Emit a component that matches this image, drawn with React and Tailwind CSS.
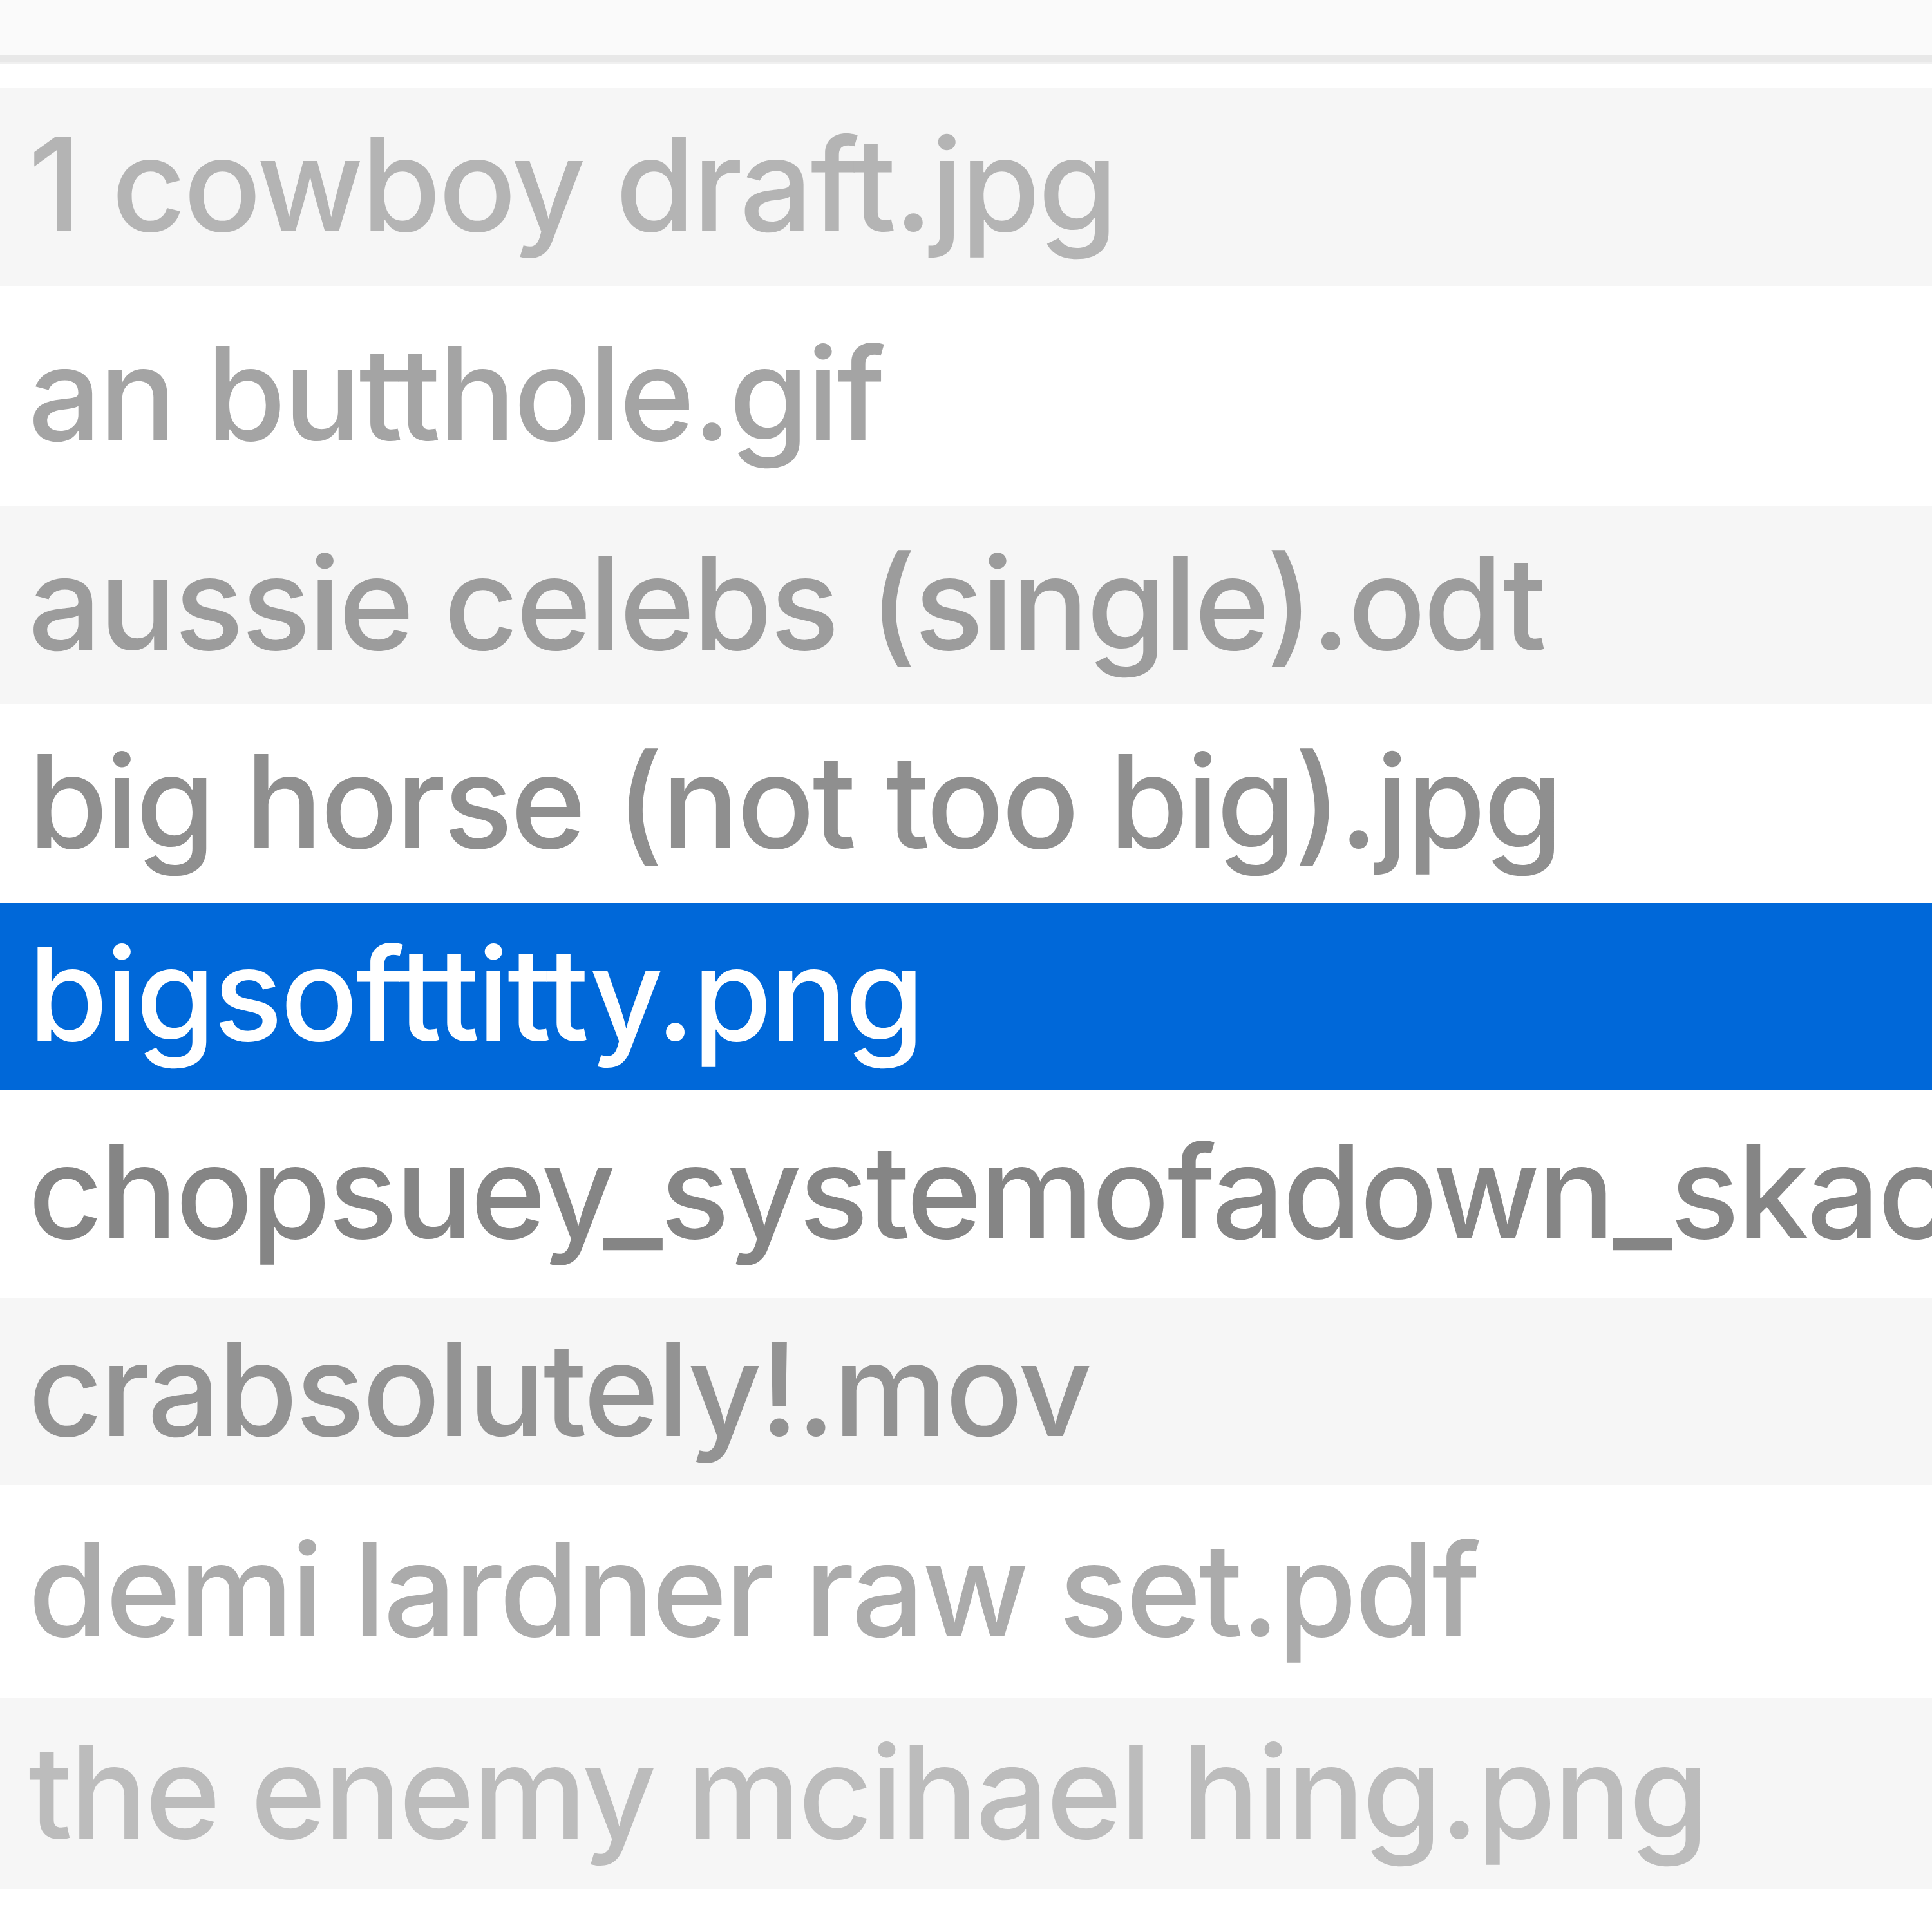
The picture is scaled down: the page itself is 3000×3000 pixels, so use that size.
const files = [
  { name: "1 cowboy draft.jpg", color: "text-[#b4b4b4]", bg: "bg-[#f6f6f6]", h: "h-[308px]" },
  { name: "an butthole.gif", color: "text-[#a4a4a4]", bg: "bg-white", h: "h-[342px]" },
  { name: "aussie celebs (single).odt", color: "text-[#9c9c9c]", bg: "bg-[#f6f6f6]", h: "h-[307px]" },
  { name: "big horse (not too big).jpg", color: "text-[#8f8f8f]", bg: "bg-white", h: "h-[309px]" },
  { name: "bigsofttitty.png", color: "text-white", bg: "bg-[#0068d9]", h: "h-[290px]" },
  { name: "chopsuey_systemofadown_skacover_final.mp3", color: "text-[#858585]", bg: "bg-white", h: "h-[323px]" },
  { name: "crabsolutely!.mov", color: "text-[#939393]", bg: "bg-[#f6f6f6]", h: "h-[291px]" },
  { name: "demi lardner raw set.pdf", color: "text-[#ababab]", bg: "bg-white", h: "h-[331px]" },
  { name: "the enemy mcihael hing.png", color: "text-[#bcbcbc]", bg: "bg-[#f6f6f6]", h: "h-[297px]" },
]

function FileRow({ file }) {
  return (
    <div className={`${file.h} ${file.bg} flex items-center pl-[44px] overflow-hidden whitespace-nowrap`}>
      <span className={`text-[200px] leading-none font-medium tracking-[-0.018em] pb-[8px] ${file.color}`}>
        {file.name}
      </span>
    </div>
  )
}

export default function App() {
  return (
    <div
      className="w-[3000px] h-[3000px] bg-white overflow-hidden flex flex-col"
      style={{ fontFamily: "Inter, 'Noto Sans', sans-serif" }}
    >
      {/* header strip */}
      <div className="h-[86px] bg-[#fafafa]" />
      <div className="h-[14px] bg-[#e8e8e8] border-b-[4px] border-[#f0f0f0]" />
      <div className="h-[36px] bg-white" />

      {files.map((file) => (
        <FileRow key={file.name} file={file} />
      ))}
    </div>
  )
}
